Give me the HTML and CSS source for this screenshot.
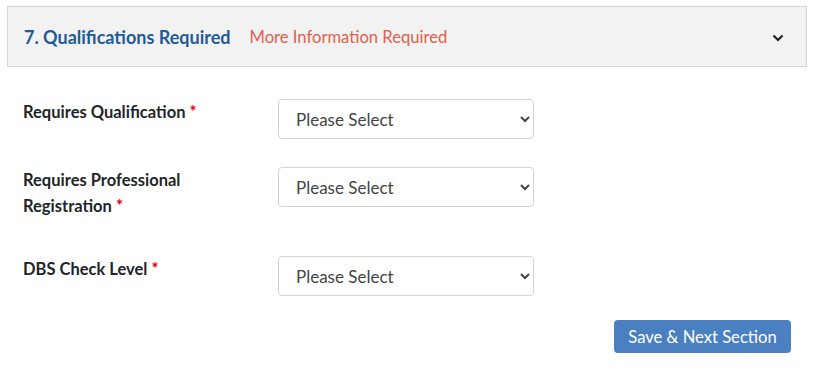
FILE: index.html
```html
<!DOCTYPE html>
<html>
<head>
<meta charset="utf-8">
<link rel="stylesheet" href="styles.css">
</head>
<body>
<div class="panel">
  <div class="panel-head">
    <span class="title">7. Qualifications Required</span>
    <span class="status">More Information Required</span>
    <svg class="toggle" width="12" height="8" viewBox="0 0 12 8"><path d="M1.5 1.5 L6 6 L10.5 1.5" fill="none" stroke="#222" stroke-width="2.2"/></svg>
  </div>
  <div class="panel-body">
    <div class="row">
      <label class="lbl">Requires Qualification <span class="req">*</span></label>
      <select class="sel"><option>Please Select</option></select>
    </div>
    <div class="row">
      <label class="lbl">Requires Professional Registration <span class="req">*</span></label>
      <select class="sel"><option>Please Select</option></select>
    </div>
    <div class="row">
      <label class="lbl">DBS Check Level <span class="req">*</span></label>
      <select class="sel"><option>Please Select</option></select>
    </div>
    <div class="actions">
      <button class="btn">Save &amp; Next Section</button>
    </div>
  </div>
</div>
</body>
</html>
```
FILE: styles.css
```css
body {
  margin: 6px 0 0 7px;
  font-family: Lato, "Open Sans", sans-serif;
  background: #fff;
  color: #212529;
}
.panel {
  width: 800px;
}
.panel-head {
  box-sizing: border-box;
  height: 61px;
  background: #f2f2f2;
  border: 1px solid #d6d6d6;
  display: flex;
  align-items: center;
  padding: 0 22px 0 16px;
}
.title {
  font-size: 18px;
  font-weight: 700;
  color: #1f5b99;
}
.status {
  margin-left: 19px;
  font-size: 16.6px;
  color: #e0604e;
}
.toggle {
  margin-left: auto;
  margin-top: 2px;
}
.panel-body {
  padding: 32px 16px 0 16px;
}
.row {
  display: grid;
  grid-template-columns: 255px 256px;
  align-items: start;
  margin-bottom: 28px;
}
.lbl {
  font-size: 16.5px;
  font-weight: 700;
  line-height: 26px;
  margin-bottom: 9px;
  padding-right: 60px;
}
.req {
  color: #e00000;
}
.sel {
  height: 40px;
  width: 256px;
  border: 1px solid #ced4da;
  border-radius: 4px;
  background: #fff;
  font-family: inherit;
  font-size: 17px;
  color: #444;
  padding: 0 10px 0 13px;
}
.actions {
  display: flex;
  justify-content: flex-end;
  margin-top: -4px;
}
.btn {
  height: 33px;
  width: 177px;
  border: none;
  border-radius: 4px;
  background: #4a80c1;
  color: #fff;
  font-family: inherit;
  font-size: 16.6px;
}
```
